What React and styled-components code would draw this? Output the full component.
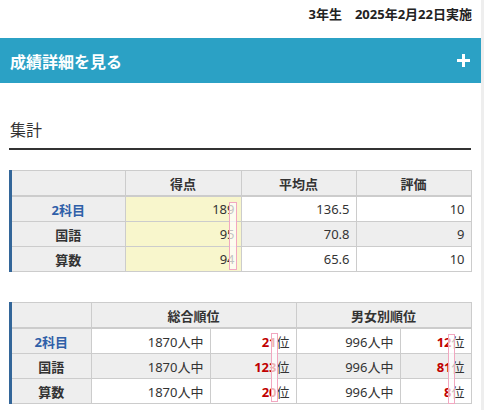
import React from 'react';
import styled, {createGlobalStyle} from 'styled-components';

const summary = [
    {label: '2科目', main: true, score: '189', avg: '136.5', grade: '10'},
    {label: '国語', score: '95', avg: '70.8', grade: '9'},
    {label: '算数', score: '94', avg: '65.6', grade: '10'},
];

const ranks = [
    {label: '2科目', main: true, total: '1870', rank: '21', gTotal: '996', gRank: '12'},
    {label: '国語', total: '1870', rank: '123', gTotal: '996', gRank: '81'},
    {label: '算数', total: '1870', rank: '20', gTotal: '996', gRank: '8'},
];

const App = () => {
    return (
        <>
            <GlobalStyle />
            <Page>
                <DateLine>3年生　2025年2月22日実施</DateLine>
                <Bar>
                    <BarTitle>成績詳細を見る</BarTitle>
                    <svg width="13" height="13" viewBox="0 0 13 13">
                        <rect x="5" y="0" width="3" height="13" fill="#fff" />
                        <rect x="0" y="5" width="13" height="3" fill="#fff" />
                    </svg>
                </Bar>
                <Section>
                    <Heading>集計</Heading>
                    <TableWrap>
                        <Table>
                            <colgroup>
                                <col style={{width: 113}} />
                                <col style={{width: 116}} />
                                <col style={{width: 115}} />
                                <col style={{width: 115}} />
                            </colgroup>
                            <thead>
                                <tr>
                                    <Th></Th>
                                    <Th>得点</Th>
                                    <Th>平均点</Th>
                                    <Th>評価</Th>
                                </tr>
                            </thead>
                            <tbody>
                                {summary.map((r, i) => (
                                    <tr key={r.label}>
                                        <Label main={r.main}>{r.label}</Label>
                                        <Num $bg="#f8f6cc">{r.score}</Num>
                                        <Num $bg={i === 1 ? '#eeeeee' : '#fff'}>{r.avg}</Num>
                                        <Num $bg={i === 1 ? '#eeeeee' : '#fff'}>{r.grade}</Num>
                                    </tr>
                                ))}
                            </tbody>
                        </Table>
                        <Mask $left={217} $top={32} $w={6} $h={66} />
                    </TableWrap>
                    <TableWrap $gap={30}>
                        <Table>
                            <colgroup>
                                <col style={{width: 79}} />
                                <col style={{width: 119}} />
                                <col style={{width: 86}} />
                                <col style={{width: 104}} />
                                <col style={{width: 71}} />
                            </colgroup>
                            <thead>
                                <tr>
                                    <Th></Th>
                                    <Th colSpan={2}>総合順位</Th>
                                    <Th colSpan={2}>男女別順位</Th>
                                </tr>
                            </thead>
                            <tbody>
                                {ranks.map((r, i) => {
                                    const bg = i === 1 ? '#eeeeee' : '#fff';
                                    return (
                                        <tr key={r.label}>
                                            <Label main={r.main}>{r.label}</Label>
                                            <Num $bg={bg}>{r.total}人中</Num>
                                            <Num $bg={bg}><Rank>{r.rank}</Rank>位</Num>
                                            <Num $bg={bg}>{r.gTotal}人中</Num>
                                            <Num $bg={bg}><Rank>{r.gRank}</Rank>位</Num>
                                        </tr>
                                    );
                                })}
                            </tbody>
                        </Table>
                        <Mask $left={259} $top={31} $w={5} $h={67} />
                        <Mask $left={436} $top={32} $w={5} $h={68} />
                    </TableWrap>
                </Section>
            </Page>
        </>
    )
}

//Styles
const GlobalStyle = createGlobalStyle`
    body {
        margin: 0;
        background: #eeeeee;
        font-family: "Noto Sans", "Noto Sans CJK JP", sans-serif;
        color: #333;
    }
`
const Page = styled.div`
    width: 481px;
    min-height: 410px;
    background: #fff;
    overflow: hidden;
`
const DateLine = styled.div`
    padding: 5px 9px 0 0;
    margin-bottom: 15px;
    text-align: right;
    font-size: 13px;
    line-height: 18px;
    font-weight: bold;
    color: #222;
`
const Bar = styled.div`
    height: 45px;
    background: #2ba1c5;
    padding: 0 11px 0 10px;
    display: flex;
    align-items: center;
    justify-content: space-between;
`
const BarTitle = styled.div`
    color: #fff;
    font-size: 16px;
    font-weight: bold;
`
const Section = styled.div`
    padding: 0 10px 0 9px;
`
const Heading = styled.h2`
    margin: 35px 0 0;
    padding: 0 0 6px 1px;
    font-size: 16px;
    line-height: 24px;
    font-weight: normal;
    color: #333;
    border-bottom: 2px solid #333;
`
const TableWrap = styled.div`
    position: relative;
    margin-top: ${props => props.$gap || 20}px;
    border-left: 3px solid #336699;
`
const Table = styled.table`
    width: 459px;
    table-layout: fixed;
    border-collapse: collapse;
    font-size: 13px;
    & thead tr {
        border-bottom: 2px solid #cccccc;
    }
`
const Th = styled.th`
    height: 24px;
    padding: 0;
    background: #eeeeee;
    border: 1px solid #cccccc;
    border-left: ${props => props.children ? '1px solid #cccccc' : 'none'};
    font-weight: bold;
    color: #333;
    text-align: center;
`
const Label = styled.td`
    height: 24px;
    padding: 0;
    background: #eeeeee;
    border: 1px solid #cccccc;
    border-left: none;
    text-align: center;
    font-weight: bold;
    color: ${props => props.main ? '#2f5fa8' : '#333'};
`
const Num = styled.td`
    height: 24px;
    padding: 0 6px 0 0;
    background: ${props => props.$bg};
    border: 1px solid #cccccc;
    text-align: right;
    color: #333;
`
const Rank = styled.span`
    color: #c00000;
    font-weight: bold;
`
const Mask = styled.div`
    position: absolute;
    left: ${props => props.$left}px;
    top: ${props => props.$top}px;
    width: ${props => props.$w}px;
    height: ${props => props.$h}px;
    border: 1px solid #f2a7c0;
    background: rgba(255, 255, 255, 0.7);
`
export default App
